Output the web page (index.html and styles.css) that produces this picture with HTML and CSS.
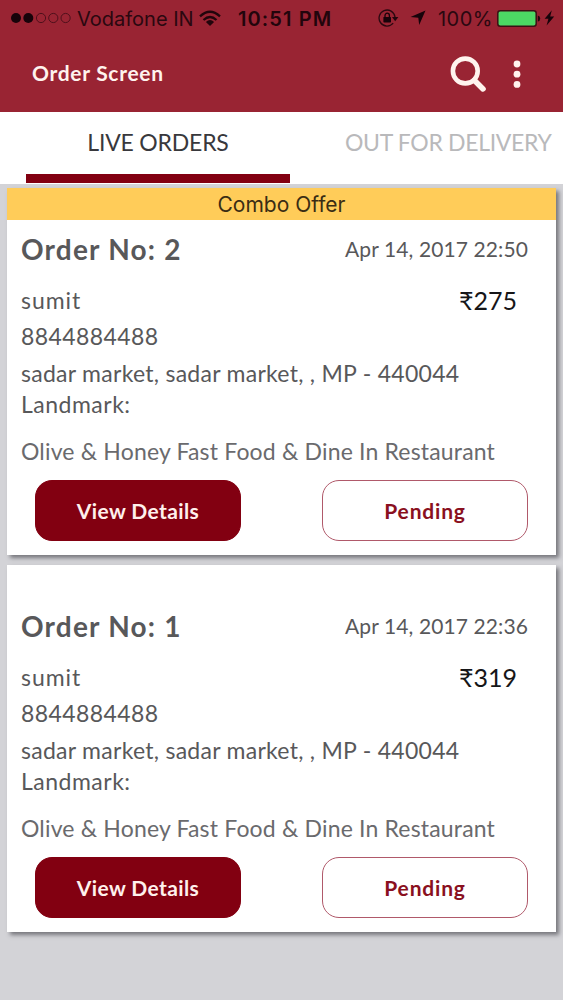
FILE: index.html
```
<!DOCTYPE html>
<html lang="en">
<head>
<meta charset="utf-8">
<title>Order Screen</title>
<link rel="stylesheet" href="styles.css">
</head>
<body>
<header class="header">
  <div class="status">
    <svg class="signal" width="62" height="14" viewBox="0 0 62 14">
      <g fill="#17030a"><circle cx="6" cy="7" r="5"/><circle cx="18.3" cy="7" r="5"/></g>
      <g fill="none" stroke="#4f101b" stroke-width="1"><circle cx="31" cy="7" r="4.6"/><circle cx="43.3" cy="7" r="4.6"/><circle cx="55.6" cy="7" r="4.6"/></g>
    </svg>
    <span class="carrier">Vodafone IN</span>
    <svg class="wifi" width="22" height="17" viewBox="0 0 22 17">
      <g fill="none" stroke="#22050c" stroke-width="2.3"><path d="M1 6.4Q11-2.8 21 6.4"/><path d="M4.5 10Q11 4 17.5 10"/></g>
      <path d="M11 16 6.9 11.9Q11 8.3 15.1 11.9Z" fill="#22050c"/>
    </svg>
    <span class="clock">10:51 PM</span>
    <div class="status-right">
      <svg width="21" height="18" viewBox="0 0 21 18">
        <path d="M15.2 14.2A8 8 0 1 1 17 8" fill="none" stroke="#2a0810" stroke-width="1.3"/>
        <path d="M14 8h6.4l-3.2 4.2z" fill="#22050c"/>
        <rect x="5.4" y="8" width="7.6" height="5.4" rx=".6" fill="#17030a"/>
        <path d="M7 8.5V6.4a2.2 2.2 0 0 1 4.4 0v2.1" fill="none" stroke="#17030a" stroke-width="1.3"/>
      </svg>
      <svg class="location" width="16" height="16" viewBox="0 0 16 16"><path d="M15.5.5 9.2 15 8.3 7.7.5 7.1Z" fill="#17030a"/></svg>
      <span class="percent">100%</span>
      <svg class="battery" width="44" height="17" viewBox="0 0 44 17">
        <rect x=".8" y=".8" width="38.4" height="15.4" rx="2.5" fill="#4cd964" stroke="#3a1014" stroke-width="1.5"/>
        <path d="M40.8 5.5q2.4.4 2.4 3t-2.4 3z" fill="#22050c"/>
      </svg>
      <svg class="bolt" width="11" height="16" viewBox="0 0 11 16"><path d="M7.8.3.6 8.8h3.8L2.6 15.6 10.2 6.6H6.2Z" fill="#17030a"/></svg>
    </div>
  </div>
  <div class="appbar">
    <h1 class="title">Order Screen</h1>
    <svg class="search" width="37" height="37" viewBox="0 0 37 37" fill="none" stroke="#fff3ee">
      <circle cx="15.3" cy="15" r="12.4" stroke-width="4.6"/><path d="m24.3 24.3 8.7 8.6" stroke-width="5.6" stroke-linecap="round"/>
    </svg>
    <svg class="more" width="8" height="28" viewBox="0 0 8 28" fill="#fff3ee"><circle cx="4" cy="4" r="3.4"/><circle cx="4" cy="14.2" r="3.4"/><circle cx="4" cy="24.4" r="3.4"/></svg>
  </div>
</header>
<nav class="tabs">
  <div class="tab tab-active">LIVE ORDERS</div>
  <div class="tab tab-next">OUT FOR DELIVERY</div>
</nav>
<main class="orders">
  <article class="card">
    <div class="banner">Combo Offer</div>
    <div class="row head"><h2 class="order-no">Order No: 2</h2><span class="date">Apr 14, 2017 22:50</span></div>
    <div class="row customer"><span class="name">sumit</span><span class="price">₹275</span></div>
    <div class="phone">8844884488</div>
    <div class="address">sadar market, sadar market, , MP - 440044</div>
    <div class="address landmark">Landmark:</div>
    <div class="restaurant">Olive &amp; Honey Fast Food &amp; Dine In Restaurant</div>
    <div class="actions"><button class="btn view">View Details</button><button class="btn pending">Pending</button></div>
  </article>
  <article class="card">
    <div class="banner banner-empty"></div>
    <div class="row head"><h2 class="order-no">Order No: 1</h2><span class="date">Apr 14, 2017 22:36</span></div>
    <div class="row customer"><span class="name">sumit</span><span class="price">₹319</span></div>
    <div class="phone">8844884488</div>
    <div class="address">sadar market, sadar market, , MP - 440044</div>
    <div class="address landmark">Landmark:</div>
    <div class="restaurant">Olive &amp; Honey Fast Food &amp; Dine In Restaurant</div>
    <div class="actions"><button class="btn view">View Details</button><button class="btn pending">Pending</button></div>
  </article>
</main>
</body>
</html>
```

FILE: styles.css
```
* { box-sizing: border-box; }
body {
  margin: 0;
  width: 563px;
  height: 1000px;
  overflow: hidden;
  background: #d3d3d7;
  color: #58585a;
  font-family: Lato, "Noto Sans", sans-serif;
  white-space: nowrap;
}
svg { display: block; flex: none; }
h1, h2 { margin: 0; }

.header { height: 112px; background: #992433; }
.status {
  display: flex;
  align-items: center;
  height: 36px;
  padding: 0 8px 0 10px;
  font: 20px/36px Inter, sans-serif;
  color: #2a0810;
}
.carrier { margin-left: 5px; width: 123px; padding-top: 1px; }
.wifi { margin-left: -1px; }
.clock { margin-left: 17px; padding-top: 1px; font-weight: 600; letter-spacing: 1.1px; color: #22050c; }
.status-right { display: flex; align-items: center; margin-left: auto; }
.location { margin-left: 11px; }
.percent { margin-left: 12px; padding-top: 1px; letter-spacing: .5px; }
.battery { margin-left: 4px; }
.bolt { margin-left: 3px; }
.appbar { display: flex; align-items: center; height: 76px; padding: 0 42px 0 32px; }
.title { margin-right: auto; padding-bottom: 2px; font-size: 21px; line-height: 30px; letter-spacing: .7px; color: #fff3ee; }
.more { margin-left: 26px; }

.tabs { display: flex; height: 72px; padding-left: 26px; background: #fff; font-size: 23px; line-height: 60px; }
.tab-active { width: 264px; border-bottom: 9px solid #820011; margin-bottom: 1px; text-align: center; color: #38383c; letter-spacing: -.2px; }
.tab-next { margin-left: 55px; color: #b9b9bb; letter-spacing: -.33px; }

.orders { display: flex; flex-direction: column; gap: 10px; padding: 4px 7px 0; }
.card { width: 549px; height: 367px; background: #fff; box-shadow: 3px 3px 4px rgba(60, 60, 66, .6); }
.banner { height: 32px; background: #ffcc59; color: #3a2c14; font: 21px/34px Inter, sans-serif; text-align: center; }
.banner-empty { background: none; }
.row { display: flex; justify-content: space-between; padding: 0 28px 0 14px; }
.head { height: 62px; line-height: 58px; }
.order-no { font-size: 28px; letter-spacing: 1.2px; }
.date { font-size: 21px; letter-spacing: .1px; }
.customer { height: 37px; line-height: 37px; }
.name { font-size: 23px; letter-spacing: .95px; }
.price { margin-right: 11px; font-size: 25px; color: #161618; }
.phone { height: 39px; padding-left: 14px; font-size: 23px; line-height: 35px; letter-spacing: .4px; }
.address { height: 31px; padding-left: 14px; font-size: 23px; line-height: 31px; letter-spacing: .27px; }
.landmark { letter-spacing: .5px; }
.restaurant { height: 60px; padding-left: 14px; font-size: 23px; line-height: 62px; letter-spacing: .17px; color: #6a6a6d; }
.actions { display: flex; justify-content: space-between; padding: 0 28px; }
.btn { width: 206px; height: 61px; border-radius: 17px; padding: 0; font: 700 21px/59px Lato, sans-serif; }
.view { border: 1px solid #820011; background: #820011; color: #fff0ec; letter-spacing: .4px; }
.pending { border: 1px solid #b0596a; background: #fff; color: #8a1020; letter-spacing: .8px; }
```
